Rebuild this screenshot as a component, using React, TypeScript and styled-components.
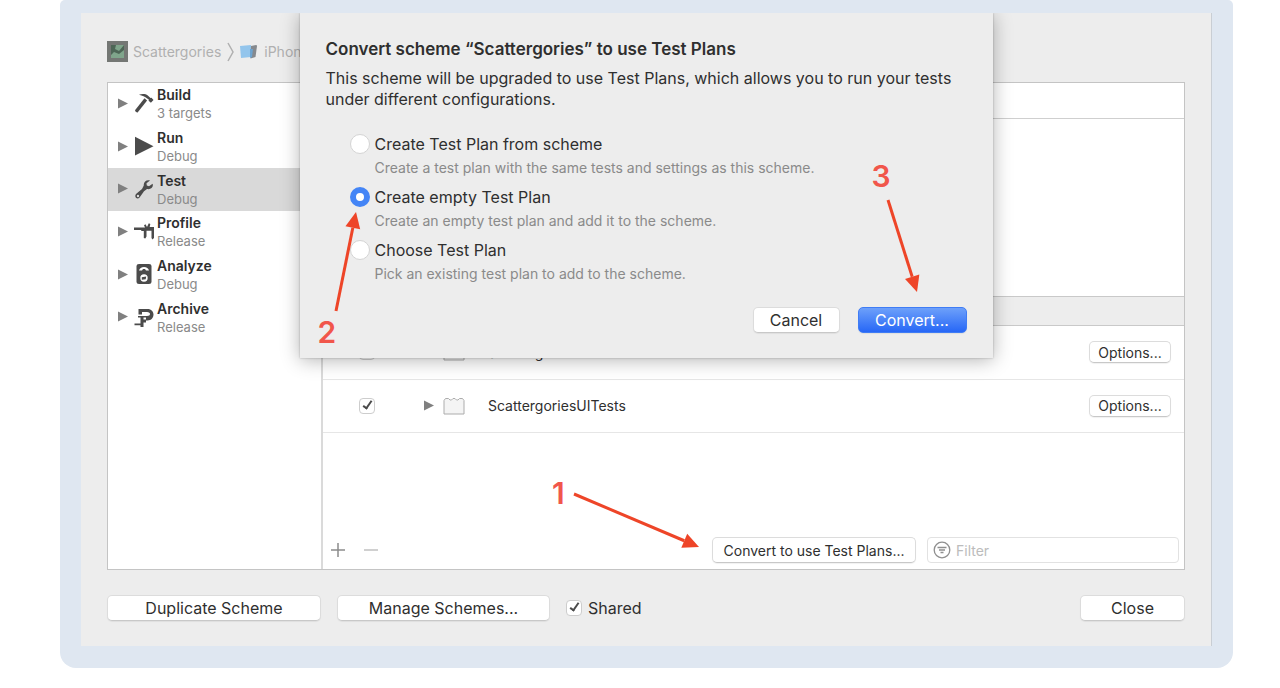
import React, { useState } from "react";
import styled, { createGlobalStyle, css } from "styled-components";

const GlobalStyle = createGlobalStyle`
  *, *::before, *::after { box-sizing: border-box; }
  body {
    margin: 0;
    background: #fff;
    color: #2f2f2f;
    font-family: Inter, "Liberation Sans", sans-serif;
    font-size: 16px;
  }
  button, input { font: inherit; color: inherit; }
  ul, ol { list-style: none; margin: 0; padding: 0; }
  h1, p { margin: 0; }
`;

const Frame = styled.main`
  margin: 0 47px 20px 60px;
  padding: 13px 22px 22px 21px;
  background: #dfe7f1;
  border-radius: 5px 5px 16px 16px;
`;

const Window = styled.div`
  position: relative;
  overflow: hidden;
  padding: 0 26px 25px;
  background: #ededed;
  box-shadow: 1px 0 0 #c9ced4;
`;

const Breadcrumb = styled.ol`
  display: flex;
  align-items: center;
  height: 69px;
  padding-top: 8px;
  color: #b0b0b0;
  font-size: 14px;

  li { display: flex; align-items: center; }
`;

const CrumbText = styled.span`
  margin-left: 5px;
`;

const Chevron = styled.svg`
  margin: 0 5px 0 6px;
`;

const Panel = styled.div`
  display: flex;
  height: 488px;
  background: #fff;
  border: 1px solid #c4c4c4;
`;

const Sidebar = styled.nav`
  flex: none;
  width: 215px;
  border-right: 2px solid #dadada;
`;

const SchemeList = styled.ul`
  display: flex;
  flex-direction: column;
  height: 256px;

  li { display: flex; flex: 1; }
`;

const SchemeRow = styled.button<{ $selected?: boolean }>`
  display: flex;
  align-items: center;
  width: 100%;
  padding: 0 0 0 10px;
  border: 0;
  text-align: left;
  background: ${(p) => (p.$selected ? "#d9d9d9" : "transparent")};

  svg { margin-bottom: 2px; }
`;

const ActionIcon = styled.svg`
  margin: 0 3px 0 6px;
  fill: #4b4b4b;
  stroke: none;
`;

const ActionText = styled.span`
  display: flex;
  flex-direction: column;
  line-height: 18px;
`;

const ActionName = styled.strong`
  font-size: 14px;
  font-weight: 600;
`;

const ActionDetail = styled.span`
  font-size: 13px;
  color: #8a8a8a;
`;

const Editor = styled.section`
  position: relative;
  flex: 1;
  display: flex;
  flex-direction: column;
  min-width: 0;
`;

const TabStrip = styled.div`
  height: 36px;
  border-bottom: 1px solid #cfcfcf;
`;

const Settings = styled.div`
  height: 177px;
`;

const TableHeading = styled.div`
  height: 30px;
  background: #ededed;
  border: solid #c9c9c9;
  border-width: 1px 0;
`;

const TargetTable = styled.table`
  width: 100%;
  border-collapse: collapse;
  font-size: 14px;
`;

const TargetRow = styled.tr`
  height: 53px;
  border-bottom: 1px solid #e6e6e6;

  td { padding: 0; }
`;

const CheckCell = styled.td`
  width: 101px;
  > div { display: flex; padding-left: 36px; }
`;

const BundleCell = styled.td`
  width: 64px;
  > div { display: flex; align-items: center; gap: 9px; }
`;

const ActionCell = styled.td`
  text-align: right;
  && { padding-right: 13px; }
`;

const EditorBar = styled.div`
  display: flex;
  align-items: center;
  margin-top: auto;
  padding: 0 5px 6px 7px;
`;

const GlyphButton = styled.button`
  display: flex;
  padding: 0;
  margin-right: 17px;
  border: 0;
  background: none;
`;

const PushButton = styled.button<{ $width: number; $small?: boolean; $primary?: boolean }>`
  display: inline-flex;
  align-items: center;
  justify-content: center;
  width: ${(p) => p.$width}px;
  height: ${(p) => (p.$small ? 22 : 26)}px;
  padding: 0;
  border: 1px solid #dcdcdc;
  border-bottom-color: #c8c8c8;
  border-radius: 5px;
  background: #fff;
  box-shadow: 0 1px 1px rgba(0, 0, 0, 0.06);
  white-space: nowrap;
  font-size: ${(p) => (p.$small ? 14 : 16)}px;
  ${(p) =>
    p.$primary &&
    css`
      border-color: #3f7cf5;
      color: #fff;
      background: linear-gradient(#6da0fa, #2767f6);
    `}
`;

const ConvertButton = styled(PushButton)`
  margin-left: auto;
  font-size: 14px;
`;

const FilterBox = styled.label`
  display: flex;
  align-items: center;
  gap: 5px;
  width: 252px;
  height: 26px;
  margin-left: 11px;
  padding: 0 5px;
  border: 1px solid #e2e2e2;
  border-radius: 4px;
`;

const FilterInput = styled.input`
  flex: 1;
  min-width: 0;
  padding: 0;
  border: 0;
  outline: 0;
  background: none;
  font-size: 14px;
  &::placeholder { color: #bcbcbc; opacity: 1; }
`;

const Footer = styled.div`
  display: flex;
  align-items: center;
  gap: 16px;
  padding-top: 25px;

  > :last-child { margin-left: auto; }
`;

const CheckLabel = styled.label`
  display: flex;
  align-items: center;
  gap: 6px;
`;

const CheckBox = styled.input`
  appearance: none;
  flex: none;
  width: 16px;
  height: 16px;
  margin: 0;
  border: 1px solid #cdcdcd;
  border-radius: 4px;
  background: #fff;

  &:checked::after {
    content: "";
    display: block;
    width: 5px;
    height: 10px;
    margin: 0 0 0 5px;
    border: solid #4a4a4a;
    border-width: 0 2px 2px 0;
    transform: rotate(35deg);
  }
`;

const Sheet = styled.form`
  position: absolute;
  top: 0;
  right: 0;
  left: 0;
  width: 693px;
  height: 345px;
  margin: 0 auto;
  padding: 26px 26px 25px;
  display: flex;
  flex-direction: column;
  background: #ededed;
  box-shadow: 0 2px 18px rgba(0, 0, 0, 0.3), 0 0 2px rgba(0, 0, 0, 0.25);
`;

const SheetTitle = styled.h1`
  font-size: 17px;
  font-weight: 600;
  line-height: 20px;
`;

const SheetText = styled.p`
  margin-top: 9px;
  line-height: 21px;
  white-space: nowrap;
`;

const Choices = styled.div`
  display: flex;
  flex-direction: column;
  gap: 8px;
  padding: 23px 0 0 24px;
`;

const Choice = styled.label`
  display: grid;
  grid-template-columns: 20px 1fr;
  column-gap: 5px;
  align-items: center;
  line-height: 22px;
`;

const ChoiceHint = styled.small`
  grid-column: 2;
  margin-top: 3px;
  font-size: 14px;
  line-height: 20px;
  color: #8a8a8a;
`;

const Radio = styled.input`
  appearance: none;
  width: 20px;
  height: 20px;
  margin: 0;
  border: 1px solid #d4d4d4;
  border-radius: 50%;
  background: #fff;

  &:checked { border: 6px solid #4485f6; }
`;

const SheetButtons = styled.div`
  display: flex;
  justify-content: flex-end;
  gap: 18px;
  margin-top: auto;
`;

const SheetNotes = styled.div`
  position: absolute;
  inset: 0;
  pointer-events: none;
`;

const EditorNote = styled.div`
  position: absolute;
  right: 484px;
  bottom: 16px;
  width: 150px;
  height: 76px;
  pointer-events: none;
`;

const StepNumber = styled.span<{ $x: number; $y: number }>`
  position: absolute;
  left: ${(p) => p.$x}px;
  top: ${(p) => p.$y}px;
  color: #f1564b;
  font-size: 30px;
  font-weight: 600;
  line-height: 30px;
`;

const ArrowLayer = styled.svg`
  position: absolute;
  inset: 0;
  overflow: visible;
`;

function Arrow({ from, to }: { from: [number, number]; to: [number, number] }) {
  const dx = to[0] - from[0];
  const dy = to[1] - from[1];
  const len = Math.hypot(dx, dy);
  const ux = dx / len;
  const uy = dy / len;
  const bx = to[0] - ux * 16;
  const by = to[1] - uy * 16;
  return (
    <g fill="#ee4528" stroke="#ee4528">
      <line x1={from[0]} y1={from[1]} x2={bx} y2={by} strokeWidth="3" />
      <polygon
        stroke="none"
        points={`${to[0]},${to[1]} ${bx - uy * 7.5},${by + ux * 7.5} ${bx + uy * 7.5},${by - ux * 7.5}`}
      />
    </g>
  );
}

const Disclosure = () => (
  <svg width="10" height="11" viewBox="0 0 10 11" aria-hidden="true">
    <path d="M0 0.5 L10 5.5 L0 10.5Z" fill="#808080" />
  </svg>
);

const BundleIcon = () => (
  <svg width="22" height="18" viewBox="0 0 22 18" aria-hidden="true">
    <path
      d="M1 17V3.5L2.500 1.500h3L7 3h1.500L10 1.500h2L13.500 3H15l1.500-1.500h3L21 3.500V17Z"
      fill="#f4f4f4"
      stroke="#acacac"
    />
  </svg>
);

const icons: Record<string, React.ReactNode> = {
  Build: (
    <>
      <path d="M5 1.800C8 .6 11.500.8 13.800 2.400l2.700 2.700 1-.3 2 2.300-2.600 2.700-2.300-2 .2-1.200-1.600-1.200C11 3.600 8.500 2.600 5 1.800Z" />
      <path d="M10.500 5.200l2.600 2.200L3.800 19.300c-.7.800-3.300-1.200-2.600-2.200Z" />
    </>
  ),
  Run: <path d="M1 .8 19.500 10.200 1 19.500Z" />,
  Test: (
    <path
      fillRule="evenodd"
      d="M18.600 4.700 15 7.200 12.800 6.500 12.500 4.300 16 1.400C12.500.4 9.300 2.800 9.800 6.600L8 10 2.300 14.800C-.4 17.500 3 21.300 5.600 18.500L10 12.300l3-2.300c3.800.7 6.800-1.600 5.600-5.300ZM4 15.800a1.200 1.200 0 1 1 0 2.400 1.200 1.200 0 0 1 0-2.400Z"
    />
  ),
  Profile: (
    <path d="M0 6.500h11L10 4.200 11.500 3.300 13 6 14.800 2.200 16.300 3 15.700 6H20V17L18.400 18.500 17.500 17V9.800H12.500V15.500L11.300 17.500 9.800 17V10H7.500L7 9H0Z" />
  ),
  Analyze: (
    <path
      fillRule="evenodd"
      d="M5 0h10q2.500 0 2.500 2v16q0 2-2.500 2H5q-2.500 0-2.500-2V2q0-2 2.500-2ZM5 6.500h10Q14 3 10 3T5 6.500ZM8 6.500l1-1.500h2l1 1.500ZM10 10.300a3.700 3.700 0 1 0 0 7.400 3.700 3.700 0 0 0 0-7.400ZM7.800 13.200l4.400-.8-.5 2.800-3.900.5Z"
    />
  ),
  Archive: (
    <path
      fillRule="evenodd"
      d="M4.500 2h9C17.300 2 19.500 4.500 19.500 7.500S17.300 13.500 13.500 13.500H12V15.500H9.500V20H6.500V18.200H.5v-1.700h6v-6H4V9h9c4 0 4-4 0-4H8V7.500H4.500ZM9.500 10.500v2H12v-2Z"
    />
  ),
};

const actions = [
  ["Build", "3 targets"],
  ["Run", "Debug"],
  ["Test", "Debug"],
  ["Profile", "Release"],
  ["Analyze", "Debug"],
  ["Archive", "Release"],
];

const choices = [
  ["Create Test Plan from scheme", "Create a test plan with the same tests and settings as this scheme."],
  ["Create empty Test Plan", "Create an empty test plan and add it to the scheme."],
  ["Choose Test Plan", "Pick an existing test plan to add to the scheme."],
];

const targets = ["ScattergoriesTests", "ScattergoriesUITests"];

export default function App() {
  const [choice, setChoice] = useState(1);
  const [selected, setSelected] = useState("Test");

  return (
    <>
      <GlobalStyle />
      <Frame>
        <Window>
          <Breadcrumb>
            <li>
              <svg width="21" height="21" viewBox="0 0 21 21" aria-hidden="true">
                <rect width="21" height="21" fill="#747774" />
                <rect x="4" y="4" width="13" height="13" fill="#7fa58b" />
                <path d="M4 4h5l-1 4 4 2 5-6v5l-5 4-5-2-3 3Z" fill="#4d6656" />
              </svg>
              <CrumbText>Scattergories</CrumbText>
            </li>
            <li>
              <Chevron width="7" height="20" viewBox="0 0 7 20" aria-hidden="true">
                <path d="M1 1 6 10 1 19" fill="none" stroke="#b0b0b0" strokeWidth="1.500" />
              </Chevron>
              <svg width="20" height="16" viewBox="0 0 20 16" aria-hidden="true">
                <path d="M1 2 12 1v12L2 14Z" fill="#93c5ec" />
                <path d="M12 2 17 1q1 0 1 1l-1.500 11-5 1.500Z" fill="#85898e" />
                <path d="M11 5h3l-1 8-2 1Z" fill="#6da3cf" />
              </svg>
              <CrumbText>iPhone</CrumbText>
            </li>
          </Breadcrumb>

          <Panel>
            <Sidebar>
              <SchemeList>
                {actions.map(([name, detail]) => (
                  <li key={name}>
                    <SchemeRow type="button" $selected={name === selected} onClick={() => setSelected(name)}>
                      <Disclosure />
                      <ActionIcon width="20" height="20" viewBox="0 0 20 20" aria-hidden="true">
                        {icons[name]}
                      </ActionIcon>
                      <ActionText>
                        <ActionName>{name}</ActionName>
                        <ActionDetail>{detail}</ActionDetail>
                      </ActionText>
                    </SchemeRow>
                  </li>
                ))}
              </SchemeList>
            </Sidebar>

            <Editor>
              <TabStrip />
              <Settings />
              <TableHeading />
              <TargetTable>
                <tbody>
                  {targets.map((name) => (
                    <TargetRow key={name}>
                      <CheckCell>
                        <div>
                          <CheckBox type="checkbox" defaultChecked aria-label={name} />
                        </div>
                      </CheckCell>
                      <BundleCell>
                        <div>
                          <Disclosure />
                          <BundleIcon />
                        </div>
                      </BundleCell>
                      <td>{name}</td>
                      <ActionCell>
                        <PushButton type="button" $width={82} $small>Options...</PushButton>
                      </ActionCell>
                    </TargetRow>
                  ))}
                </tbody>
              </TargetTable>
              <EditorBar>
                <GlyphButton type="button" aria-label="Add">
                  <svg width="16" height="16" viewBox="0 0 16 16">
                    <path d="M1 8h14M8 1v14" stroke="#8c8c8c" strokeWidth="1.500" />
                  </svg>
                </GlyphButton>
                <GlyphButton type="button" aria-label="Remove">
                  <svg width="16" height="16" viewBox="0 0 16 16">
                    <path d="M1 8h14" stroke="#c0c0c0" strokeWidth="1.500" />
                  </svg>
                </GlyphButton>
                <ConvertButton type="button" $width={204}>Convert to use Test Plans...</ConvertButton>
                <FilterBox>
                  <svg width="18" height="18" viewBox="0 0 18 18" fill="none" stroke="#8f8f8f" aria-hidden="true">
                    <circle cx="9" cy="9" r="7.800" strokeWidth="1.300" />
                    <path d="M4.500 6.500h9M6 9h6M7.500 11.500h3" strokeWidth="1.500" />
                  </svg>
                  <FilterInput type="text" placeholder="Filter" aria-label="Filter" />
                </FilterBox>
              </EditorBar>
              <EditorNote>
                <StepNumber $x={2} $y={1}>1</StepNumber>
                <ArrowLayer width="150" height="76" aria-hidden="true">
                  <Arrow from={[24, 17]} to={[149, 70]} />
                </ArrowLayer>
              </EditorNote>
            </Editor>
          </Panel>

          <Footer>
            <PushButton type="button" $width={214}>Duplicate Scheme</PushButton>
            <PushButton type="button" $width={213}>Manage Schemes...</PushButton>
            <CheckLabel>
              <CheckBox type="checkbox" defaultChecked />
              Shared
            </CheckLabel>
            <PushButton type="button" $width={105}>Close</PushButton>
          </Footer>

          <Sheet onSubmit={(e) => e.preventDefault()}>
            <SheetTitle>Convert scheme “Scattergories” to use Test Plans</SheetTitle>
            <SheetText>
              This scheme will be upgraded to use Test Plans, which allows you to run your tests
              <br />
              under different configurations.
            </SheetText>
            <Choices>
              {choices.map(([label, hint], i) => (
                <Choice key={label}>
                  <Radio type="radio" name="plan" checked={choice === i} onChange={() => setChoice(i)} />
                  {label}
                  <ChoiceHint>{hint}</ChoiceHint>
                </Choice>
              ))}
            </Choices>
            <SheetButtons>
              <PushButton type="button" $width={87}>Cancel</PushButton>
              <PushButton type="submit" $width={109} $primary>Convert...</PushButton>
            </SheetButtons>
            <SheetNotes>
              <StepNumber $x={18} $y={304}>2</StepNumber>
              <StepNumber $x={572} $y={148}>3</StepNumber>
              <ArrowLayer width="693" height="345" aria-hidden="true">
                <Arrow from={[36, 298]} to={[56, 199]} />
                <Arrow from={[588, 187]} to={[617, 279]} />
              </ArrowLayer>
            </SheetNotes>
          </Sheet>
        </Window>
      </Frame>
    </>
  );
}
